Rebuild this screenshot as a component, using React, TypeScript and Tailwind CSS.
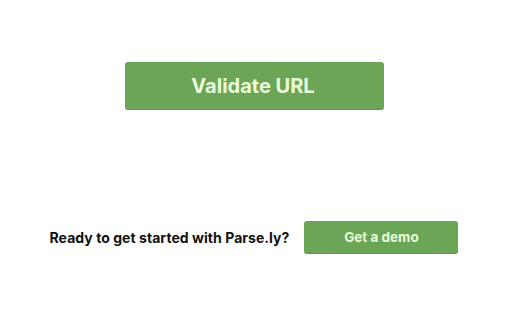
export default function App() {
  return (
    <div className="w-[512px] h-[320px] bg-white flex flex-col items-center" style={{ fontFamily: "Inter, 'Liberation Sans', sans-serif" }}>
      <button className="mt-[62px] ml-[-3px] w-[259px] h-[48px] rounded-[3px] bg-[#6aa656] border-b border-[#5e964c] text-[#eafbdc] text-[20px] font-bold pr-[3px]">
        Validate URL
      </button>
      <div className="mt-[111px] ml-[-4px] flex items-center gap-[15px]">
        <span className="text-[14px] font-bold text-[#111] tracking-[0.05px]">Ready to get started with Parse.ly?</span>
        <button className="w-[154px] h-[33px] rounded-[3px] bg-[#6aa656] border-b border-[#5e964c] text-[#eafbdc] text-[13.5px] font-bold">
          Get a demo
        </button>
      </div>
    </div>
  );
}
